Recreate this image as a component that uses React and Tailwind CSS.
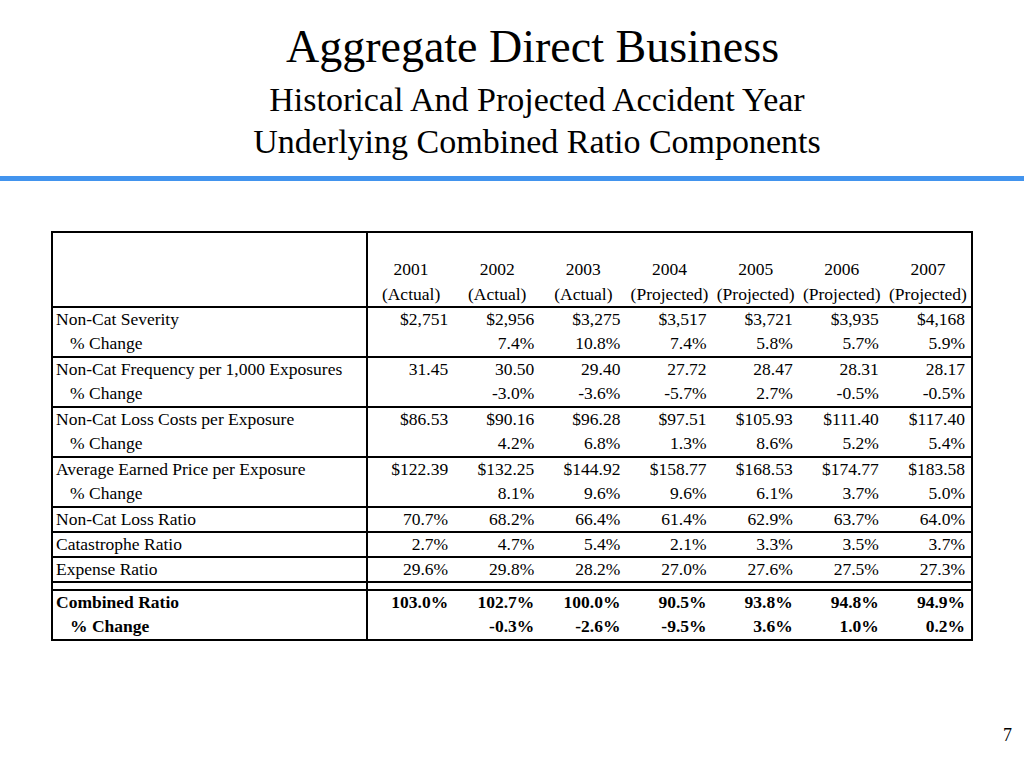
import React from 'react';

const years = [
  { y: "2001", t: "(Actual)" },
  { y: "2002", t: "(Actual)" },
  { y: "2003", t: "(Actual)" },
  { y: "2004", t: "(Projected)" },
  { y: "2005", t: "(Projected)" },
  { y: "2006", t: "(Projected)" },
  { y: "2007", t: "(Projected)" },
];

const groups = [
  [
    { label: "Non-Cat Severity", vals: ["$2,751", "$2,956", "$3,275", "$3,517", "$3,721", "$3,935", "$4,168"] },
    { label: "% Change", sub: true, vals: ["", "7.4%", "10.8%", "7.4%", "5.8%", "5.7%", "5.9%"] },
  ],
  [
    { label: "Non-Cat Frequency per 1,000 Exposures", vals: ["31.45", "30.50", "29.40", "27.72", "28.47", "28.31", "28.17"] },
    { label: "% Change", sub: true, vals: ["", "-3.0%", "-3.6%", "-5.7%", "2.7%", "-0.5%", "-0.5%"] },
  ],
  [
    { label: "Non-Cat Loss Costs per Exposure", vals: ["$86.53", "$90.16", "$96.28", "$97.51", "$105.93", "$111.40", "$117.40"] },
    { label: "% Change", sub: true, vals: ["", "4.2%", "6.8%", "1.3%", "8.6%", "5.2%", "5.4%"] },
  ],
  [
    { label: "Average Earned Price per Exposure", vals: ["$122.39", "$132.25", "$144.92", "$158.77", "$168.53", "$174.77", "$183.58"] },
    { label: "% Change", sub: true, vals: ["", "8.1%", "9.6%", "9.6%", "6.1%", "3.7%", "5.0%"] },
  ],
  [{ label: "Non-Cat Loss Ratio", vals: ["70.7%", "68.2%", "66.4%", "61.4%", "62.9%", "63.7%", "64.0%"] }],
  [{ label: "Catastrophe Ratio", vals: ["2.7%", "4.7%", "5.4%", "2.1%", "3.3%", "3.5%", "3.7%"] }],
  [{ label: "Expense Ratio", vals: ["29.6%", "29.8%", "28.2%", "27.0%", "27.6%", "27.5%", "27.3%"] }],
];

const combined = [
  { label: "Combined Ratio", vals: ["103.0%", "102.7%", "100.0%", "90.5%", "93.8%", "94.8%", "94.9%"] },
  { label: "% Change", sub: true, vals: ["", "-0.3%", "-2.6%", "-9.5%", "3.6%", "1.0%", "0.2%"] },
];

const cols = "grid grid-cols-[315px_repeat(7,minmax(0,1fr))]";

// first row of a group carries the rule line inside its 25px
function Row({ row, first, bold }) {
  return (
    <div
      className={
        cols +
        " h-[25px]" +
        (first ? " border-t-2 border-black leading-[23px]" : " leading-[25px]") +
        (bold ? " font-bold" : "")
      }
    >
      <div className={"border-r-2 border-black whitespace-nowrap " + (row.sub ? "pl-[17px]" : "pl-[3px]")}>
        {row.label}
      </div>
      {row.vals.map((v, i) => (
        <div key={i} className="text-right pr-[6px] whitespace-nowrap">{v}</div>
      ))}
    </div>
  );
}

export default function App() {
  return (
    <div
      className="w-[1024px] h-[768px] bg-white text-black overflow-hidden"
      style={{ fontFamily: '"Liberation Serif", "Times New Roman", serif' }}
    >
      <div className="pl-[50px] text-center pt-[23px]">
        <h1 className="pr-[9px] text-[46px] leading-[48px]">Aggregate Direct Business</h1>
        <p className="mt-[8px] text-[34px] leading-[42px]">Historical And Projected Accident Year</p>
        <p className="text-[34px] leading-[42px]">Underlying Combined Ratio Components</p>
      </div>

      <div className="mt-[13px] h-[5px] bg-[#4294ee]"></div>

      <div className="ml-[51px] mt-[50px] w-[922px] border-2 border-black text-[17.5px]">
        <div className={cols + " h-[73px] leading-[25px]"}>
          <div className="border-r-2 border-black"></div>
          {years.map((c) => (
            <div key={c.y} className="pt-[24px] text-center whitespace-nowrap">
              <div>{c.y}</div>
              <div>{c.t}</div>
            </div>
          ))}
        </div>

        {groups.map((g, gi) => (
          <div key={gi}>
            {g.map((r, ri) => (
              <Row key={ri} row={r} first={ri === 0} />
            ))}
          </div>
        ))}

        <div className={cols + " h-[8px] border-t-2 border-black"}>
          <div className="border-r-2 border-black"></div>
        </div>

        <div>
          {combined.map((r, ri) => (
            <Row key={ri} row={r} first={ri === 0} bold />
          ))}
        </div>
      </div>

      <div className="mt-[82px] pr-[12px] text-right text-[18px] leading-[24px]">7</div>
    </div>
  );
}
